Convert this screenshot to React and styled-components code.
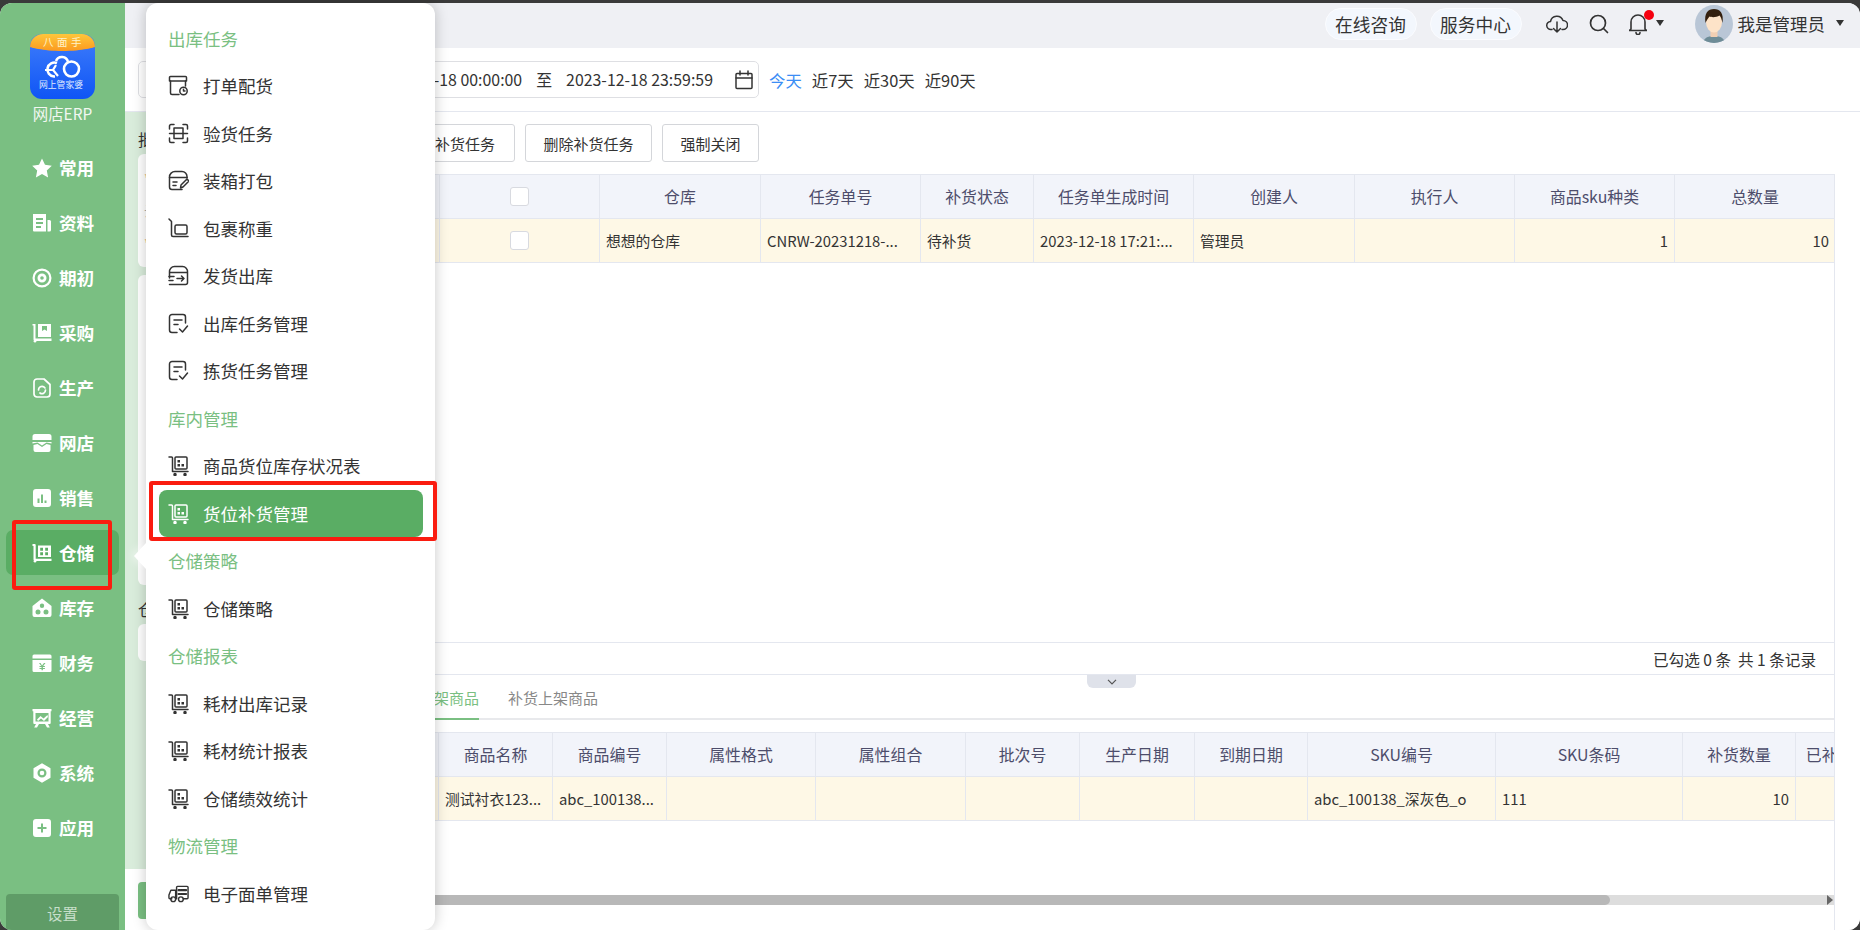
import React from 'react';
import styled, { createGlobalStyle } from 'styled-components';

const GREEN = '#7abf82';
const DARKGREEN = '#5aad64';
const BORDER = '#e4e7ef';

const Global = createGlobalStyle`
  html, body { margin: 0; padding: 0; background: #3a3a3a; height: 930px; overflow: hidden; }
  * { box-sizing: border-box; }
  body { font-family: "Noto Sans CJK SC", "Noto Sans", sans-serif; color: #333; }
`;

const Window = styled.div`
  position: relative; margin-top: 3px; width: 1860px; height: 927px; display: flex;
`;
const WindowClip = styled.div`
  display: flex; width: 100%; height: 100%; border-radius: 12px; overflow: hidden; background: #fff;
`;
const Sidebar = styled.aside`
  width: 125px; flex: none; background: ${GREEN}; display: flex; flex-direction: column; position: relative;
`;
const LogoWrap = styled.div`
  margin-top: 31px; display: flex; flex-direction: column; align-items: center;
`;
const LogoName = styled.div`
  color: #f1f7f1; font-size: 15.4px; line-height: 20px; margin-top: 4px; margin-bottom: 22px;
`;
const NavList = styled.nav`
  display: flex; flex-direction: column; gap: 10px; padding: 0 6px;
`;
const NavItem = styled.div`
  position: relative; height: 45px; border-radius: 7px; display: flex; align-items: center; gap: 7px; padding-left: 26px;
  background: ${p => (p.$active ? DARKGREEN : 'transparent')};
  color: #fff; font-size: 17.6px; font-weight: 700;
`;
const SidebarRed = styled.span`
  position: absolute; left: 6px; right: 7px; top: -10px; bottom: -15px; border: 4px solid #fa1c10; border-radius: 3px; z-index: 5;
`;
const Settings = styled.div`
  margin: auto 6px 0; height: 36px; padding-top: 1px; background: #5f9c67; border-radius: 4px 4px 0 0; color: #c7dfca;
  font-size: 15.4px; display: flex; align-items: center; justify-content: center;
`;
const Main = styled.div`
  flex: 1; min-width: 0; display: flex; flex-direction: column;
`;
const Header = styled.header`
  height: 45px; flex: none; background: #eff0f4; display: flex; align-items: center; justify-content: flex-end; position: relative;
`;
const Pill = styled.div`
  width: 92px; height: 32px; border-radius: 16px; background: #f3f7fd; border: 1px solid #fbfcff;
  font-size: 17.7px; display: flex; align-items: center; justify-content: center; margin-right: 13px; margin-top: -3px;
`;
const HeadIcon = styled.span`
  display: flex; width: 22px; justify-content: center; margin-left: ${p => p.$ml}px; margin-top: -3px; position: relative;
`;
const RedDot = styled.i`
  position: absolute; width: 10px; height: 10px; border-radius: 50%; background: #f5000f; top: -3px; right: -5px;
`;
const Caret = styled.i`
  width: 0; height: 0; border: 4.5px solid transparent; border-top: 6px solid #333; border-bottom: 0;
  margin-left: ${p => p.$ml}px; margin-top: -5px; margin-right: ${p => p.$mr || 0}px;
`;
const Avatar = styled.span`
  margin-left: ${p => p.$ml}px; display: flex; margin-top: -3px;
`;
const UserName = styled.span`
  font-size: 17.5px; margin-left: 5px; margin-top: -5px;
`;
const FilterBar = styled.div`
  height: 64px; flex: none; background: #fff; border-bottom: 1px solid ${BORDER}; padding: 13px 0 0 13px; display: flex; align-items: flex-start;
`;
const DateRange = styled.div`
  width: 621px; height: 37px; border: 1px solid #dedfe3; border-radius: 5px; display: flex; align-items: center; justify-content: flex-end;
  font-size: 15.9px; padding-right: 4px; gap: 14px;
`;
const CalIcon = styled.span`
  display: flex; margin-left: 7px;
`;
const QuickList = styled.div`
  display: flex; gap: 10px; margin-left: 10px; height: 37px; align-items: center; font-size: 16.4px;
`;
const Quick = styled.span`
  color: ${p => (p.$on ? '#3b8df5' : '#333')};
`;
const Body = styled.div`
  flex: 1; min-height: 0; display: flex;
`;
const LeftPanel = styled.div`
  width: 305px; flex: none; display: flex; flex-direction: column;
`;
const Tint = styled.div`
  height: 757px; background: #d9ecdb; padding: 16px 0 0 13px; display: flex; flex-direction: column; font-size: 15.4px;
`;
const FieldLabel = styled.div`
  line-height: 22px; height: 26px; color: #333;
`;
const Card = styled.div`
  background: #fff; border-radius: 6px; height: ${p => p.$h}px; margin-bottom: ${p => p.$mb}px; padding: 8px 6px; margin-right: 12px;
  display: flex; flex-direction: column; justify-content: space-around; color: #aaa; font-size: 14px;
`;
const Star = styled.span` color: #e0a050; `;
const LeftFoot = styled.div`
  padding: 13px 0 0 13px;
`;
const GreenButton = styled.div`
  width: 120px; height: 37px; background: ${GREEN}; border-radius: 4px;
`;
const RightPane = styled.div`
  flex: 1; min-width: 0; padding: 12px 25px 0 0; display: flex; flex-direction: column; background: #fff;
`;
const Toolbar = styled.div`
  display: flex; gap: 10px; justify-content: flex-end; width: 329px; height: 38px; margin-bottom: 12px;
`;
const Btn = styled.div`
  width: ${p => p.$w}px; height: 38px; border: 1px solid #d4d6da; border-radius: 3px; background: #fff;
  font-size: 15px; display: flex; align-items: center; justify-content: center; white-space: nowrap; overflow: hidden; flex: none;
`;
const TablePanel = styled.section`
  height: 501px; border-right: 1px solid ${BORDER}; border-bottom: 1px solid ${BORDER}; display: flex; flex-direction: column; position: relative;
`;
const TableBox = styled.div`
  flex: 1; overflow: hidden;
`;
const Table = styled.table`
  border-collapse: collapse; table-layout: fixed; width: ${p => p.$w}px;
`;
const Th = styled.th`
  height: 44px; background: #f2f4fa; border: 1px solid ${BORDER}; font-weight: 400; font-size: 15.9px; color: #4d4d6b; padding: 0; text-align: center; white-space: nowrap;
`;
const Td = styled.td`
  height: 44px; background: #fef8e6; border: 1px solid ${BORDER}; font-size: 14.8px; color: #333; padding: 0 6px; white-space: nowrap; overflow: hidden;
  text-align: ${p => p.$align || 'left'};
`;
const CheckCell = styled(Td)`
  padding: 0;
`;
const Check = styled.span`
  display: block; width: 19px; height: 19px; margin-left: 70px; border: 1px solid #d8dae0; border-radius: 3px; background: #fff;
`;
const PanelFoot = styled.div`
  height: 32px; flex: none; border-top: 1px solid ${BORDER}; display: flex; align-items: center; justify-content: flex-end; padding-right: 18px;
  font-size: 15.6px; white-space: pre;
`;
const Collapse = styled.div`
  position: absolute; left: 657px; bottom: -14px; width: 49px; height: 13px; background: #dfe2ea; border-radius: 0 0 6px 6px;
  display: flex; align-items: center; justify-content: center; z-index: 2;
`;
const BottomPanel = styled.section`
  flex: 1; display: flex; flex-direction: column; border-right: 1px solid ${BORDER}; min-height: 0;
`;
const Tabs = styled.div`
  height: 45px; flex: none; border-bottom: 2px solid #e8e9ec; display: flex; gap: 29px; align-items: flex-end; justify-content: flex-start; margin-bottom: 12px;
`;
const Tab = styled.div`
  font-size: 15px; height: 31px; line-height: 18px; white-space: nowrap; color: ${p => (p.$on ? GREEN : '#888')};
  border-bottom: ${p => (p.$on ? `2px solid ${GREEN}` : '2px solid transparent')}; margin-bottom: -2px;
  width: ${p => p.$w || 'auto'}; text-align: right; flex: none;
`;
const TabBox = styled.div`
  flex: 1; overflow: hidden; position: relative; min-height: 0;
`;
const Scrollbar = styled.div`
  height: 10px; margin-top: 74px; background: #dddddd; position: relative; margin-bottom: 1px;
`;
const Thumb = styled.div`
  position: absolute; left: 0; top: 0; bottom: 0; width: 1180px; background: #b8b8b8; border-radius: 0 5px 5px 0;
`;
const ScrollArrow = styled.i`
  position: absolute; right: 1px; top: 0; width: 0; height: 0; border: 5px solid transparent; border-left: 6px solid #666; border-right: 0;
`;
const Popup = styled.div`
  position: absolute; left: 146px; top: 0; width: 289px; height: 927px; background: #fff; border-radius: 12px;
  padding: 11.5px 12px 0 13px; box-shadow: 0 0 14px rgba(0, 0, 0, 0.22); z-index: 3;
`;
const PopupArrow = styled.i`
  position: absolute; left: -12px; top: 540px; width: 0; height: 0; border: 13px solid transparent; border-left: 0; border-right: 12px solid #fff;
  filter: drop-shadow(-3px 0 4px rgba(255,255,255,.55));
`;
const SectionTitle = styled.div`
  height: 47.5px; display: flex; align-items: center; padding-left: 9px; color: ${GREEN}; font-size: 17.5px;
`;
const PopRow = styled.div`
  position: relative; height: 47.5px; display: flex; align-items: center; gap: 14px; padding-left: 9px; font-size: 17.5px; border-radius: 8px;
  background: ${p => (p.$on ? DARKGREEN : 'transparent')}; color: ${p => (p.$on ? '#fff' : '#333')};
`;
const PopRed = styled.span`
  position: absolute; left: -10px; right: -14px; top: -9px; bottom: -4px; border: 4px solid #fa1c10; border-radius: 3px;
`;
const IconSvg = styled.svg`
  flex: none; display: block;
`;

const Stroke = ({ children, w = 21, h = 21, vb = '0 0 21 21', sw = 1.5 }) => (
  <IconSvg width={w} height={h} viewBox={vb} fill="none" stroke="currentColor" strokeWidth={sw} strokeLinecap="round" strokeLinejoin="round">{children}</IconSvg>
);
const Fill = ({ children }) => (
  <IconSvg width="20" height="20" viewBox="0 0 20 20" fill="#fff">{children}</IconSvg>
);

const IcoPrint = () => <Stroke><path d="M1.5 6V2.5a1 1 0 0 1 1-1h15a1 1 0 0 1 1 1V6Z" /><path d="M2.5 6v12a1.5 1.5 0 0 0 1.5 1.5h7" /><path d="M17.5 6v5" /><circle cx="15.5" cy="16" r="3.7" /><path d="M15.5 14.2V16h1.5" /></Stroke>;
const IcoScan = () => <Stroke><path d="M1.5 6V3a1.5 1.5 0 0 1 1.5-1.5h3M15 1.5h3A1.5 1.5 0 0 1 19.500 3v3M1.500 15v3A1.500 1.500 0 0 0 3 19.500h3M15 19.500h3a1.500 1.500 0 0 0 1.500-1.500v-3" /><path d="M1.500 10.500h18" /><path d="M6 10V5h9v5" /><path d="M6 11v4.500h9V11" /></Stroke>;
const IcoPack = () => <Stroke><path d="M14 19.500H4A2.500 2.500 0 0 1 1.500 17V7A5.500 5.500 0 0 1 7 1.500h7A5 5 0 0 1 19 6.500V8" /><path d="M1.500 7.500H19" /><path d="M5 12h4M5 15.500h3" /><path d="m12.500 18 .5-3 6-6 2 2-6 6Z" /></Stroke>;
const IcoWeigh = () => <Stroke><path d="M1 1l2.500 2.500V17A1.500 1.500 0 0 0 5 18.500h15" /><rect x="7" y="7" width="12" height="9" rx="1.500" /></Stroke>;
const IcoShip = () => <Stroke><path d="M1.500 13V7a5 5 0 0 1 5-5.500h8a5 5 0 0 1 5 5.500v10.500a2 2 0 0 1-2 2H1.500" /><path d="M2 7.500h17" /><path d="M1 11.500h5M1 15.500h4" /><path d="M9 13.500h7M13.500 11l2.500 2.500-2.500 2.500" /></Stroke>;
const IcoTask = () => <Stroke><path d="M9 19.500H4A2.500 2.500 0 0 1 1.500 17V4A2.500 2.500 0 0 1 4 1.500h11A2.500 2.500 0 0 1 17.500 4v6" /><path d="M6 7h8M6 11.500h4" /><path d="m11.500 16 3 3 5-6" /></Stroke>;
const IcoCart = () => <Stroke><path d="M1 2h2.500a1 1 0 0 1 1 1v13" /><rect x="7" y="2" width="12" height="12" rx="1" /><path d="M4.500 16.500H20" /><rect x="9.500" y="5" width="2.500" height="2.500" fill="currentColor" stroke="none" /><rect x="13.500" y="9" width="2.500" height="2.500" fill="currentColor" stroke="none" /><rect x="9.500" y="9" width="2.500" height="2.500" fill="currentColor" stroke="none" /><circle cx="7" cy="19.500" r="1" fill="currentColor" /><circle cx="17" cy="19.500" r="1" fill="currentColor" /></Stroke>;
const IcoTruck = () => <Stroke vb="0 0 22 21"><path d="M4 16H2a1 1 0 0 1-1-1v-3l2-5h5v9H8" /><path d="M9 16V4a1 1 0 0 1 1-1h10a1 1 0 0 1 1 1v11a1 1 0 0 1-1 1h-4" /><circle cx="5.500" cy="16.500" r="2.500" /><circle cx="13.500" cy="16.500" r="2.500" /><path d="M11 7h8M11 11h8" strokeWidth="2.200" strokeDasharray="1.500 1" /></Stroke>;

const navIcons = {
  star: <Fill><path d="M10 0.500l3 6.300 6.800.9-5 4.800 1.300 6.900-6.100-3.400-6.100 3.400L5.200 12.500l-5-4.800 6.800-.9Z" /></Fill>,
  doc: <Fill><path fillRule="evenodd" d="M1 1h13v17.500H2a1 1 0 0 1-1-1Zm3 4v2h7V5Zm0 4v2h7V9Zm0 4v2h5v-2Z" /><path d="M15.500 7h2a1.500 1.500 0 0 1 1.500 1.500v8.500a1.500 1.500 0 0 1-1.500 1.500h-2Z" /></Fill>,
  disc: <Fill><path fillRule="evenodd" d="M10 .5a9.500 9.500 0 1 1 0 19 9.500 9.500 0 0 1 0-19Zm0 2.200a7.300 7.300 0 1 0 0 14.600 7.300 7.300 0 0 0 0-14.600Zm0 2.800a4.500 4.500 0 1 1 0 9 4.500 4.500 0 0 1 0-9Zm0 2.700a1.800 1.800 0 1 0 0 3.600 1.800 1.800 0 0 0 0-3.600Z" /></Fill>,
  book: <Fill><path fillRule="evenodd" d="M6 1h13v13H6Zm4 2v5l2.500-1.500L15 8V3Z" /><path d="M.5 1h3v14.500h16V18H3a1.500 1.500 0 0 1-1.500-1.500V2.500H.5Z" /><circle cx="3" cy="18.300" r="1.300" /></Fill>,
  file: <Stroke w={20} h={20} vb="0 0 20 20" sw={1.700}><g stroke="#fff"><path d="M5 1h7l6 5.500V16a3 3 0 0 1-3 3H5a3 3 0 0 1-3-3V4a3 3 0 0 1 3-3Z" /><path d="M6.500 12a3.500 3.500 0 0 1 5.500-3l1 1M13.500 12a3.500 3.500 0 0 1-5.500 3" /></g></Stroke>,
  shop: <Fill><path fillRule="evenodd" d="M3 1h14a2.500 2.500 0 0 1 2.500 2.500V7H.5V3.500A2.500 2.500 0 0 1 3 1ZM.5 9h19v1.500l-5-1-4.500 3-4.500-3-5 1Z" /><path d="M1.500 12l4-1 4.500 3 4.500-3 4 1v5a2 2 0 0 1-2 2h-13a2 2 0 0 1-2-2Z" /></Fill>,
  chart: <Fill><path fillRule="evenodd" d="M4 1h12a3 3 0 0 1 3 3v12a3 3 0 0 1-3 3H4a3 3 0 0 1-3-3V4a3 3 0 0 1 3-3Zm1.500 9.500V15h2v-4.500Zm3.500-4V15h2V6.500Zm3.500 6V15h2v-2.500Z" /></Fill>,
  ware: <Fill><path d="M.5 1h2.200a1 1 0 0 1 1 1v13.800H19.500V18H3a1.500 1.500 0 0 1-1.500-1.500V3H.5Z" /><circle cx="3" cy="18.300" r="1.300" /><path fillRule="evenodd" d="M6 2.500h13v11.500H6Zm2.200 2.200v3H11v-3Zm5 0v3H16v-3Zm-5 4.500v3H11v-3Zm5 0v3H16v-3Z" /></Fill>,
  house: <Fill><path fillRule="evenodd" d="M10 .5l9.500 7.500v9a2 2 0 0 1-2 2h-15a2 2 0 0 1-2-2V8ZM10 5.500a2.200 2.200 0 1 0 0 4.400 2.200 2.200 0 0 0 0-4.400ZM6 11.500a2.500 2.500 0 1 0 0 5 2.500 2.500 0 0 0 0-5Zm8 0a2.500 2.500 0 1 0 0 5 2.500 2.500 0 0 0 0-5Z" /></Fill>,
  wallet: <Fill><path fillRule="evenodd" d="M2 1.500h16A1.500 1.500 0 0 1 19.500 3v2.500H.5V3A1.500 1.500 0 0 1 2 1.500ZM.5 7h19v10.500A1.500 1.500 0 0 1 18 19H2a1.500 1.500 0 0 1-1.500-1.500Zm6.500 3l2.300 3H7.500v1h2v1h-2v1h2v1.200h1.400V16h2v-1h-2v-1h2v-1h-1.700l2.300-3h-1.500L10 12.500 8.500 10Z" /></Fill>,
  manage: <Fill><path fillRule="evenodd" d="M.5 1h19v2.200h-.8V15a1 1 0 0 1-1 1H16l1.800 3.500H15l-2-3.500H7l-2 3.500H2.200L4 16H2.300a1 1 0 0 1-1-1V3.200H.5Zm3 4v8.500h13V5Zm1.500 6.500l3.500-3.500 3 2.500L15.500 7l.5 2-4 4-3-2.500L6 13Z" /></Fill>,
  sys: <Fill><path fillRule="evenodd" d="M10 .3l8.500 4.900v9.600L10 19.700l-8.500-4.900V5.200Zm0 5.200a4.500 4.500 0 1 0 0 9 4.500 4.500 0 0 0 0-9Zm0 2.200a2.300 2.300 0 1 1 0 4.600 2.300 2.300 0 0 1 0-4.600Z" /></Fill>,
  plus: <Fill><path fillRule="evenodd" d="M4 1h12a3 3 0 0 1 3 3v12a3 3 0 0 1-3 3H4a3 3 0 0 1-3-3V4a3 3 0 0 1 3-3Zm5 4.500V9H5.500v2H9v3.500h2V11h3.500V9H11V5.500Z" /></Fill>,
};

const nav = [
  ['star', '常用'], ['doc', '资料'], ['disc', '期初'], ['book', '采购'], ['file', '生产'], ['shop', '网店'], ['chart', '销售'],
  ['ware', '仓储', true], ['house', '库存'], ['wallet', '财务'], ['manage', '经营'], ['sys', '系统'], ['plus', '应用'],
];

const popup = [
  { t: '出库任务' },
  { i: <IcoPrint />, l: '打单配货' }, { i: <IcoScan />, l: '验货任务' }, { i: <IcoPack />, l: '装箱打包' },
  { i: <IcoWeigh />, l: '包裹称重' }, { i: <IcoShip />, l: '发货出库' }, { i: <IcoTask />, l: '出库任务管理' }, { i: <IcoTask />, l: '拣货任务管理' },
  { t: '库内管理' },
  { i: <IcoCart />, l: '商品货位库存状况表' }, { i: <IcoCart />, l: '货位补货管理', on: true },
  { t: '仓储策略' },
  { i: <IcoCart />, l: '仓储策略' },
  { t: '仓储报表' },
  { i: <IcoCart />, l: '耗材出库记录' }, { i: <IcoCart />, l: '耗材统计报表' }, { i: <IcoCart />, l: '仓储绩效统计' },
  { t: '物流管理' },
  { i: <IcoTruck />, l: '电子面单管理' },
];

const Logo = () => (
  <svg width="65" height="65" viewBox="0 0 65 65">
    <defs>
      <linearGradient id="lb" x1="0" y1="0" x2="0" y2="1"><stop offset="0" stopColor="#3f7dfb" /><stop offset="1" stopColor="#0f55f5" /></linearGradient>
      <linearGradient id="lo" x1="0" y1="0" x2="0" y2="1"><stop offset="0" stopColor="#ffc63a" /><stop offset="1" stopColor="#fb9a20" /></linearGradient>
    </defs>
    <rect width="65" height="65" rx="12" fill="url(#lb)" />
    <path d="M0 13A13 13 0 0 1 13 0h39a13 13 0 0 1 13 13c0 0-12 4-32.500 4S0 13 0 13Z" fill="url(#lo)" />
    <text x="34" y="12" textAnchor="middle" fontSize="10.500" letterSpacing="3.500" fill="#fff3c8" fontFamily="'Noto Sans CJK SC', sans-serif">八面手</text>
    <g fill="none" stroke="#fff" strokeWidth="2.600">
      <path d="M27 29a7 7 0 1 0-3 13.500h1" />
      <path d="M15 36h9" strokeWidth="2.200" />
      <path d="M26 31l-3 5 5 6" strokeWidth="2.200" />
      <path d="M26 27a6.300 6.300 0 0 1 12 1" />
      <circle cx="41.500" cy="35" r="7.500" />
    </g>
    <text x="31" y="54" textAnchor="middle" fontSize="8.800" fill="#dfe9ff" fontFamily="'Noto Sans CJK SC', sans-serif">网上管家婆</text>
  </svg>
);

const AvatarPic = () => (
  <svg width="38" height="38" viewBox="0 0 38 38">
    <circle cx="19" cy="19" r="19" fill="#b9c6d6" />
    <clipPath id="av"><circle cx="19" cy="19" r="19" /></clipPath>
    <g clipPath="url(#av)">
      <path d="M8 38c1-6 6-7 11-7s10 1 11 7Z" fill="#6e8c97" />
      <rect x="15.500" y="24" width="7" height="8" fill="#f1cfb3" />
      <ellipse cx="19" cy="17" rx="8" ry="10.500" fill="#fde3c8" />
      <path d="M10.500 18C9 8 13 4 19 4s10 4 8.500 14c-1-4-1.500-6-3-7.500-3 2-8 2-10 1-1.500 2-3 4-4 6.500Z" fill="#33200f" />
    </g>
  </svg>
);

const Chevron = () => (
  <svg width="10" height="6" viewBox="0 0 10 6" fill="none" stroke="#555" strokeWidth="1.200"><path d="M1 .8l4 4 4-4" /></svg>
);

const topCols = [9, 160, 161, 160, 113, 160, 161, 160, 160, 161];
const botCols = [8, 114, 114, 149, 150, 114, 115, 113, 188, 187, 113, 100];

export default function App() {
  return (
    <Window>
      <Global />
      <WindowClip>
        <Sidebar>
          <LogoWrap>
            <Logo />
            <LogoName>网店ERP</LogoName>
          </LogoWrap>
          <NavList>
            {nav.map(([ic, label, on]) => (
              <NavItem key={label} $active={on}>
                {navIcons[ic]}
                {label}
                {on && <SidebarRed />}
              </NavItem>
            ))}
          </NavList>
          <Settings>设置</Settings>
        </Sidebar>
        <Main>
          <Header>
            <Pill>在线咨询</Pill>
            <Pill>服务中心</Pill>
            <HeadIcon $ml={11}>
              <Stroke w={22} h={20} vb="0 0 22 20"><path d="M6 15.500H5a4 4 0 0 1-.5-8A6.500 6.500 0 0 1 17 6.500a4.500 4.500 0 0 1 0 9h-1" /><path d="M11 8v10M7.500 14.500 11 18l3.500-3.500" /></Stroke>
            </HeadIcon>
            <HeadIcon $ml={20}>
              <Stroke w={20} h={20} vb="0 0 20 20" sw={1.700}><circle cx="9" cy="9" r="7.500" /><path d="m14.500 14.500 4 4" /></Stroke>
            </HeadIcon>
            <HeadIcon $ml={17}>
              <Stroke w={18} h={22} vb="0 0 18 22" sw={1.600}><path d="M2 16V9a7 7 0 0 1 14 0v7l1.500 1.500h-17Z" /><path d="M7 19.500a2 2 0 0 0 4 0" /></Stroke>
              <RedDot />
            </HeadIcon>
            <Caret $ml={7} />
            <Avatar $ml={31}><AvatarPic /></Avatar>
            <UserName>我是管理员</UserName>
            <Caret $ml={11} $mr={16} />
          </Header>
          <FilterBar>
            <DateRange>
              <span>2023-12-18 00:00:00</span>
              <span>至</span>
              <span>2023-12-18 23:59:59</span>
              <CalIcon>
                <Stroke w={20} h={20} vb="0 0 20 20"><rect x="2" y="3.500" width="16" height="15" rx="1" /><path d="M2 8h16M6 1v4M14 1v4" /></Stroke>
              </CalIcon>
            </DateRange>
            <QuickList>
              <Quick $on>今天</Quick>
              <Quick>近7天</Quick>
              <Quick>近30天</Quick>
              <Quick>近90天</Quick>
            </QuickList>
          </FilterBar>
          <Body>
            <LeftPanel>
              <Tint>
                <FieldLabel>批</FieldLabel>
                <Card $h={113} $mb={8}>
                  <span><Star>*</Star></span>
                  <span>云</span>
                  <span><Star>*</Star></span>
                </Card>
                <Card $h={310} $mb={13} />
                <FieldLabel>仓</FieldLabel>
                <Card $h={37} $mb={0} />
              </Tint>
              <LeftFoot><GreenButton /></LeftFoot>
            </LeftPanel>
            <RightPane>
              <Toolbar>
                <Btn $w={130}>新增补货任务</Btn>
                <Btn $w={127}>删除补货任务</Btn>
                <Btn $w={97}>强制关闭</Btn>
              </Toolbar>
              <TablePanel>
                <TableBox>
                  <Table $w={1405}>
                    <colgroup>{topCols.map((w, i) => <col key={i} width={w} />)}</colgroup>
                    <thead>
                      <tr>
                        <Th />
                        <Th><Check /></Th>
                        <Th>仓库</Th><Th>任务单号</Th><Th>补货状态</Th><Th>任务单生成时间</Th><Th>创建人</Th><Th>执行人</Th><Th>商品sku种类</Th><Th>总数量</Th>
                      </tr>
                    </thead>
                    <tbody>
                      <tr>
                        <Td />
                        <CheckCell><Check /></CheckCell>
                        <Td>想想的仓库</Td><Td>CNRW-20231218-...</Td><Td>待补货</Td><Td>2023-12-18 17:21:...</Td><Td>管理员</Td><Td />
                        <Td $align="right">1</Td><Td $align="right">10</Td>
                      </tr>
                    </tbody>
                  </Table>
                </TableBox>
                <PanelFoot>已勾选 0 条  共 1 条记录</PanelFoot>
                <Collapse><Chevron /></Collapse>
              </TablePanel>
              <BottomPanel>
                <Tabs>
                  <Tab $on $w="49px">架商品</Tab>
                  <Tab>补货上架商品</Tab>
                </Tabs>
                <TabBox>
                  <Table $w={1465}>
                    <colgroup>{botCols.map((w, i) => <col key={i} width={w} />)}</colgroup>
                    <thead>
                      <tr>
                        <Th /><Th>商品名称</Th><Th>商品编号</Th><Th>属性格式</Th><Th>属性组合</Th><Th>批次号</Th><Th>生产日期</Th><Th>到期日期</Th><Th>SKU编号</Th><Th>SKU条码</Th><Th>补货数量</Th><Th>已补货数量</Th>
                      </tr>
                    </thead>
                    <tbody>
                      <tr>
                        <Td /><Td>测试衬衣123...</Td><Td>abc_100138...</Td><Td /><Td /><Td /><Td /><Td />
                        <Td>abc_100138_深灰色_o</Td><Td>111</Td><Td $align="right">10</Td><Td />
                      </tr>
                    </tbody>
                  </Table>
                  <Scrollbar><Thumb /><ScrollArrow /></Scrollbar>
                </TabBox>
              </BottomPanel>
            </RightPane>
          </Body>
        </Main>
      </WindowClip>
      <Popup>
        <PopupArrow />
        {popup.map((r, i) => r.t
          ? <SectionTitle key={i}>{r.t}</SectionTitle>
          : <PopRow key={i} $on={r.on}>{r.i}{r.l}{r.on && <PopRed />}</PopRow>)}
      </Popup>
    </Window>
  );
}
